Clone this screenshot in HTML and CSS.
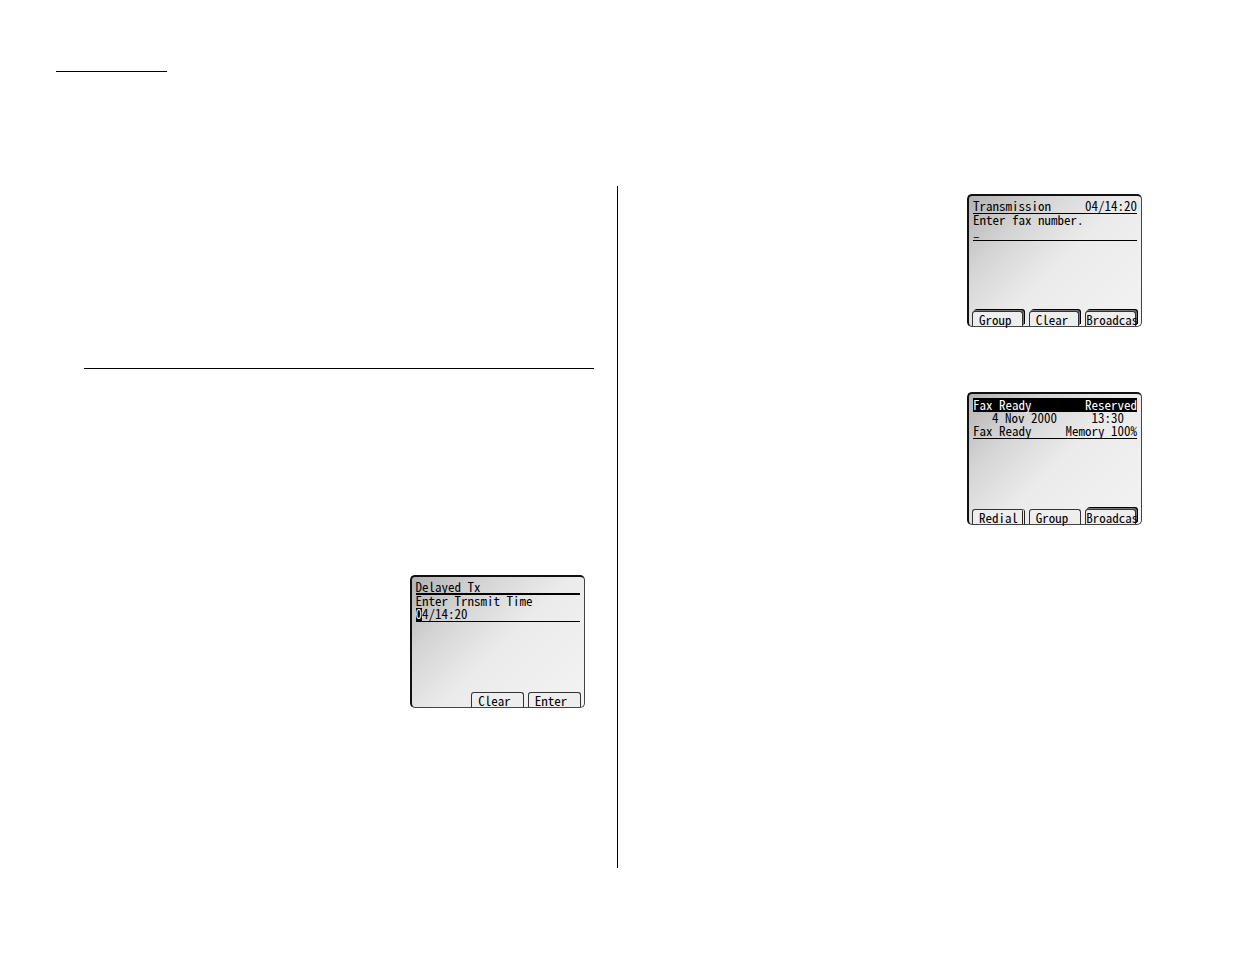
FILE: index.html
```
<!DOCTYPE html>
<html lang="en">

<head>
    <meta charset="UTF-8">
    <meta name="viewport" content="width=device-width, initial-scale=1.0">
    <title>Delayed Transmission</title>
    <link rel="stylesheet" href="styles.css">
</head>

<body>
    <header class="page-header"></header>

    <main class="columns">
        <section class="column column-left">
            <hr class="section-rule">
            <div class="lcd">
                <div class="row underline thick">Delayed Tx</div>
                <div class="row">Enter Trnsmit Time</div>
                <div class="row underline"><span><span class="cursor">0</span>4/14:20</span></div>
                <div class="tabs">
                    <button type="button" class="tab second">Clear</button>
                    <button type="button" class="tab">Enter</button>
                </div>
            </div>
        </section>

        <section class="column column-right">
            <div class="lcd">
                <div class="row underline"><span>Transmission</span><span>04/14:20</span></div>
                <div class="row">Enter fax number.</div>
                <div class="row underline entry">_</div>
                <div class="tabs">
                    <button type="button" class="tab raised">Group</button>
                    <button type="button" class="tab raised">Clear</button>
                    <button type="button" class="tab raised full">Broadcas</button>
                </div>
            </div>

            <div class="lcd">
                <div class="row inverted"><span>Fax Ready</span><span>Reserved</span></div>
                <div class="row date"><span>4 Nov 2000</span><span>13:30</span></div>
                <div class="row underline"><span>Fax Ready</span><span>Memory 100%</span></div>
                <div class="tabs">
                    <button type="button" class="tab double">Redial</button>
                    <button type="button" class="tab">Group</button>
                    <button type="button" class="tab raised full">Broadcas</button>
                </div>
            </div>
        </section>
    </main>
</body>

</html>
```
FILE: styles.css
```
* {
    box-sizing: border-box;
}

body {
    margin: 0;
    background-color: #ffffff;
    color: #000000;
    font-family: "Noto Sans CJK JP", monospace;
    font-feature-settings: "hwid";
    font-size: 13px;
    line-height: 11px;
}

.page-header {
    width: 111px;
    margin: 71px 0 114px 56px;
    border-top: 1px solid #000000;
}

.columns {
    display: grid;
    grid-template-columns: 1fr 1fr;
    min-height: calc(100vh - 272px);
}

.column {
    display: flex;
    flex-direction: column;
    align-items: flex-end;
}

.column-left {
    padding: 182px 23px 0 84px;
    border-right: 1px solid #000000;
}

.column-left .lcd {
    margin-right: 9px;
}

.column-right {
    gap: 65px;
    padding: 8px 93px 0 0;
}

.section-rule {
    width: 100%;
    margin: 0 0 206px;
    border: 0;
    border-top: 1px solid #000000;
}

/* fax display */
.lcd {
    display: flex;
    flex-direction: column;
    width: 175px;
    height: 133px;
    padding-top: 4px;
    border: 2px solid #111111;
    border-right: 1px solid #444444;
    border-bottom: 1px solid #444444;
    border-radius: 5px;
    background: linear-gradient(135deg, #b2b2b2 0%, #d4d4d4 25%, #ebebeb 52%, #f3f3f3 100%);
}

.row {
    display: flex;
    justify-content: space-between;
    height: 13px;
    margin: 0 4px;
    white-space: pre;
}

.underline {
    height: 14px;
    border-bottom: 1px solid #000000;
}

.thick {
    border-bottom-width: 2px;
}

.entry {
    line-height: 7px;
}

.inverted {
    height: 14px;
    background-color: #000000;
    color: #ffffff;
    line-height: 13px;
}

.date {
    padding: 0 13px 0 19px;
}

.cursor {
    display: inline-block;
    padding-bottom: 2px;
    background-color: #000000;
    color: #ffffff;
}

/* soft keys along the bottom edge */
.tabs {
    display: grid;
    grid-template-columns: repeat(3, 1fr);
    gap: 4px;
    height: 15px;
    margin: auto 3px 0;
}

.tab {
    min-width: 0;
    padding: 1px 0 0 6px;
    border: 1px solid #333333;
    border-bottom: 0;
    border-radius: 3px 3px 0 0;
    background-color: #eeeeee;
    color: #000000;
    font: inherit;
    font-feature-settings: inherit;
    line-height: 12px;
    text-align: left;
    white-space: nowrap;
    cursor: pointer;
}

.second {
    grid-column-start: 2;
}

.double {
    border-right: 3px double #222222;
}

.raised {
    margin-right: 2px;
    box-shadow: 1px -1px 0 #777777, 2px -2px 0 #000000;
}

.full {
    padding-left: 0;
}
```
